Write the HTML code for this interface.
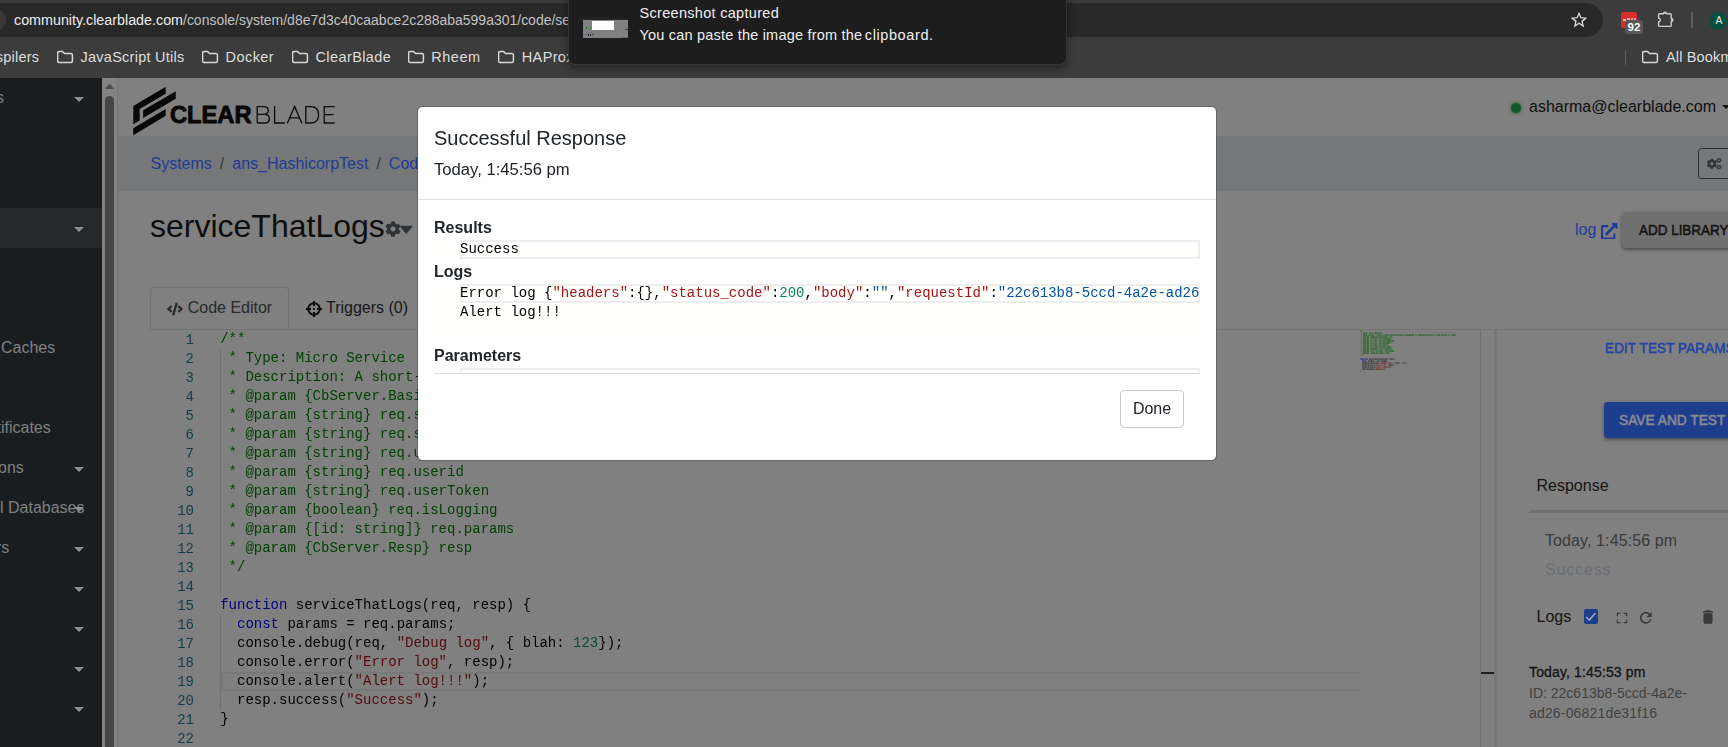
<!DOCTYPE html>
<html>
<head>
<meta charset="utf-8">
<title>ClearBlade</title>
<style>
*{box-sizing:border-box;margin:0;padding:0}
html,body{width:1728px;height:747px;overflow:hidden;background:#808080;font-family:"Liberation Sans",sans-serif;}
.abs{position:absolute;white-space:pre;}
#root{position:absolute;left:0;top:0;width:1728px;height:747px;overflow:hidden;background:#808080;}
/* ---------- browser chrome ---------- */
#chrome{position:absolute;left:0;top:0;width:1728px;height:78px;background:#3c3c3c;}
#urlbar{position:absolute;left:-30px;top:3px;width:1633px;height:34px;border-radius:17px;background:#282828;}
.ct{position:absolute;white-space:pre;font-size:14.5px;color:#dedede;line-height:20px;}
.bk{top:47px;letter-spacing:.15px}
.fold{position:absolute;top:50px;width:17px;height:14px;}
/* ---------- page ---------- */
#sidebar{position:absolute;left:0;top:78px;width:102px;height:669px;background:#1a1d20;}
.sbt{position:absolute;white-space:pre;font-size:16px;color:#808080;line-height:20px;}
.caret{position:absolute;width:0;height:0;border-left:5px solid transparent;border-right:5px solid transparent;border-top:5.5px solid #8e8e8e;}
#vscroll{position:absolute;left:102px;top:78px;width:15px;height:669px;background:#838383;}
#crumb{position:absolute;left:118px;top:136px;width:1610px;height:55px;background:#757779;}
.lnk{color:#1d3b96}
.code{position:absolute;left:0;white-space:pre;font-family:"Liberation Mono",monospace;font-size:14px;line-height:19px;height:19px;}
.ln{position:absolute;left:151px;margin-top:1px;width:43px;text-align:right;font-family:"Liberation Mono",monospace;font-size:14px;line-height:19px;color:#123c4a;}
.cm{color:#004000}.kw{color:#000080}.st{color:#520a0a}.nu{color:#054d37}.tx{color:#000}
.rm{transform-origin:0 50%;-webkit-text-stroke:.55px currentColor;}
/* ---------- modal ---------- */
#modal{position:absolute;left:417px;top:106px;width:800px;height:355px;background:#fff;background-clip:padding-box;border:1px solid rgba(0,0,0,.22);border-radius:5.500px;}
.mh{position:absolute;white-space:pre;color:#212529;}
.med{position:absolute;left:16px;width:766px;background:#fffffe;overflow:hidden;}
.mline{position:absolute;left:26px;width:740px;height:19px;border:2px solid #eeeeee;}
.mcode{position:absolute;left:26px;white-space:pre;font-family:"Liberation Mono",monospace;font-size:14px;line-height:19px;height:19px;color:#000;}
.js{color:#a31515}.jn{color:#098658}.jv{color:#0451a5}
</style>
</head>
<body>
<div id="root">

<!-- ======================= PAGE (dimmed) ======================= -->
<div id="sidebar">
  <div style="position:absolute;left:0;top:130px;width:102px;height:40px;background:#25282b"></div>
  <div class="sbt" style="left:-4px;top:10px">s</div>
  <div class="caret" style="left:74px;top:19px"></div>
  <div class="caret" style="left:74px;top:149px"></div>
  <div class="sbt" style="left:-3.5px;top:260px"> Caches</div>
  <div class="sbt" style="left:-3.500px;top:340px">tificates</div>
  <div class="sbt" style="left:-2px;top:380px">ons</div>
  <div class="caret" style="left:74px;top:389px"></div>
  <div class="sbt" style="left:0px;top:420px">l Databases</div>
  <div class="caret" style="left:74px;top:429px"></div>
  <div class="sbt" style="left:-4px;top:460px">rs</div>
  <div class="caret" style="left:74px;top:469px"></div>
  <div class="caret" style="left:74px;top:509px"></div>
  <div class="caret" style="left:74px;top:549px"></div>
  <div class="caret" style="left:74px;top:589px"></div>
  <div class="caret" style="left:74px;top:629px"></div>
</div>
<div id="vscroll">
  <div style="position:absolute;left:3px;top:18px;width:9px;height:700px;border-radius:4.5px;background:#464646"></div>
  <svg style="position:absolute;left:0;top:0" width="15" height="14" viewBox="102 78 15 14"><path d="M104.800,88.900 H114.200 L109.500,83.800 Z" fill="#4d4d4d"/></svg>
</div>
<div style="position:absolute;left:117px;top:78px;width:1px;height:669px;background:#767676"></div>
<div id="crumb"></div>

<!-- logo -->
<svg class="abs" style="left:130px;top:82px" width="212" height="56" viewBox="130 82 212 56">
  <polygon points="133.28,106.07 165.66,86.81 165.66,93.65 139.65,109.10 139.65,120.59 133.28,124.31" fill="#070707"/>
  <polygon points="143.14,110.34 175.75,91.16 175.75,98.69 143.14,118.10" fill="#070707"/>
  <polygon points="133.28,128.35 165.66,109.02 165.66,115.77 133.28,135.18" fill="#070707"/>
  <text x="170" y="123.1" font-family="Liberation Sans" font-weight="700" font-size="24.4" fill="#070707" textLength="81.5" lengthAdjust="spacingAndGlyphs" stroke="#070707" stroke-width=".9" stroke-linejoin="round">CLEAR</text>
  <g fill="none" stroke="#0c0c0c" stroke-width="1.3">
    <path d="M257.2,123 V106.6 H263.5 Q268.3,106.6 268.3,110.6 Q268.3,114.4 263.5,114.4 H257.2 M263.5,114.4 H264.3 Q269.4,114.4 269.4,118.7 Q269.4,123 264.3,123 H257.2"/>
    <path d="M274.6,106 V123 H285"/>
    <path d="M287.2,123.4 L294.6,106.4 L302,123.4 M289.7,117.8 H299.5"/>
    <path d="M305.8,123 V106.6 H311 Q318.6,106.6 318.6,114.8 Q318.6,123 311,123 Z"/>
    <path d="M334.6,106.6 H324.2 V123 H334.6 M324.2,114.6 H333.6"/>
  </g>
</svg>

<!-- user -->
<div class="abs" style="left:1511px;top:103px;width:10px;height:10px;border-radius:5px;background:#125826;box-shadow:0 0 3px 0.500px rgba(18,88,38,.75)"></div>
<div class="abs" style="left:1529px;top:97px;font-size:16px;line-height:20px;color:#0e0e0e">asharma@clearblade.com</div>
<div class="abs" style="left:1722px;top:105px;width:0;height:0;border-left:4px solid transparent;border-right:4px solid transparent;border-top:4px solid #111"></div>

<!-- breadcrumb -->
<div class="abs" style="left:150.500px;top:154px;font-size:16px;line-height:20px;color:#363a3e"><span class="lnk">Systems</span><span style="padding:0 8px">/</span><span class="lnk">ans_HashicorpTest</span><span style="padding:0 8px">/</span><span class="lnk">Code</span></div>
<div class="abs" style="left:1698px;top:148px;width:40px;height:31px;border:1px solid #2b2f33;border-radius:3.500px"></div>
<svg class="abs" style="left:1707px;top:157.700px" width="14.500" height="11.600" viewBox="0 0 640 512"><path fill="#303438" d="M512.1 191l-8.2 14.3c-3 5.3-9.400 7.500-15.100 5.400-11.800-4.400-22.600-10.700-32.100-18.600-4.600-3.800-5.800-10.500-2.800-15.700l8.200-14.300c-6.900-8-12.300-17.300-15.900-27.400h-16.500c-6 0-11.200-4.300-12.200-10.300-2-12-2.100-24.600 0-37.100 1-6 6.200-10.400 12.200-10.400h16.500c3.600-10.100 9-19.400 15.900-27.400l-8.200-14.300c-3-5.200-1.900-11.900 2.800-15.700 9.500-7.900 20.400-14.200 32.100-18.600 5.700-2.100 12.100.1 15.100 5.400l8.200 14.300c10.500-1.900 21.200-1.900 31.700 0L552 6.300c3-5.300 9.400-7.500 15.100-5.400 11.800 4.400 22.600 10.700 32.100 18.600 4.600 3.800 5.800 10.500 2.800 15.700l-8.200 14.300c6.900 8 12.300 17.300 15.900 27.400h16.500c6 0 11.200 4.300 12.200 10.300 2 12 2.100 24.600 0 37.100-1 6-6.200 10.400-12.200 10.400h-16.500c-3.600 10.100-9 19.400-15.900 27.400l8.200 14.300c3 5.200 1.900 11.900-2.800 15.700-9.500 7.900-20.400 14.200-32.100 18.600-5.700 2.100-12.100-.1-15.100-5.400l-8.200-14.300c-10.400 1.900-21.200 1.900-31.700 0zm-10.500-58.800c38.500 29.600 82.400-14.300 52.800-52.800-38.500-29.700-82.400 14.300-52.800 52.800zM386.300 286.100l33.700 16.800c10.100 5.800 14.500 18.100 10.500 29.100-8.900 24.200-26.400 46.400-42.600 65.800-7.400 8.900-20.200 11.100-30.300 5.300l-29.100-16.800c-16 13.700-34.600 24.600-54.900 31.700v33.600c0 11.600-8.300 21.600-19.700 23.600-24.600 4.200-50.400 4.400-75.900 0-11.500-2-20-11.900-20-23.600V418c-20.300-7.200-38.900-18-54.900-31.700L74 403c-10 5.800-22.900 3.600-30.300-5.300-16.200-19.400-33.300-41.600-42.200-65.700-4-10.900.4-23.200 10.500-29.100l33.300-16.800c-3.900-20.900-3.900-42.400 0-63.400L12 205.800c-10.100-5.800-14.600-18.100-10.500-29 8.900-24.200 26-46.400 42.200-65.800 7.400-8.900 20.200-11.100 30.300-5.300l29.100 16.800c16-13.700 34.600-24.600 54.900-31.700V57.100c0-11.500 8.200-21.500 19.600-23.500 24.600-4.200 50.500-4.400 76-.1 11.500 2 20 11.900 20 23.600v33.600c20.300 7.200 38.900 18 54.900 31.700l29.100-16.800c10-5.800 22.900-3.600 30.300 5.300 16.200 19.400 33.200 41.600 42.100 65.800 4 10.900.1 23.200-10 29.100l-33.700 16.800c3.900 21 3.900 42.500 0 63.500zm-117.600 21.100c59.200-77-28.700-164.900-105.700-105.700-59.200 77 28.700 164.900 105.700 105.700zm243.400 182.700l-8.200 14.300c-3 5.300-9.400 7.500-15.100 5.400-11.800-4.400-22.600-10.700-32.100-18.600-4.600-3.800-5.800-10.500-2.800-15.700l8.200-14.300c-6.900-8-12.300-17.300-15.900-27.400h-16.500c-6 0-11.200-4.300-12.200-10.300-2-12-2.100-24.600 0-37.100 1-6 6.200-10.400 12.200-10.400h16.500c3.600-10.100 9-19.400 15.900-27.400l-8.200-14.300c-3-5.200-1.900-11.900 2.800-15.700 9.500-7.900 20.400-14.200 32.100-18.600 5.700-2.100 12.100.1 15.100 5.400l8.200 14.300c10.500-1.900 21.200-1.900 31.700 0l8.200-14.300c3-5.300 9.400-7.500 15.100-5.400 11.800 4.400 22.600 10.700 32.100 18.600 4.600 3.800 5.800 10.500 2.800 15.700l-8.200 14.300c6.900 8 12.300 17.300 15.900 27.400h16.500c6 0 11.200 4.300 12.200 10.300 2 12 2.100 24.600 0 37.100-1 6-6.200 10.400-12.200 10.400h-16.500c-3.600 10.100-9 19.400-15.900 27.400l8.200 14.300c3 5.200 1.900 11.900-2.800 15.700-9.500 7.900-20.400 14.200-32.100 18.600-5.700 2.100-12.100-.1-15.100-5.400l-8.200-14.300c-10.400 1.900-21.200 1.900-31.700 0zM501.600 431c38.500 29.600 82.400-14.300 52.800-52.800-38.500-29.600-82.400 14.300-52.800 52.800z"/></svg>

<!-- title -->
<div class="abs" style="left:150px;top:207px;font-size:32px;line-height:38px;color:#0e0e0e">serviceThatLogs</div>
<svg class="abs" style="left:385px;top:221px" width="16" height="16" viewBox="0 0 512 512"><path fill="#303336" d="M487.4 315.700l-42.600-24.600c4.300-23.200 4.300-47 0-70.200l42.600-24.600c4.900-2.800 7.100-8.600 5.500-14-11.100-35.600-30-67.800-54.700-94.600-3.800-4.100-10-5.100-14.800-2.300L380.800 110c-17.900-15.400-38.500-27.300-60.800-35.100V25.800c0-5.600-3.900-10.500-9.400-11.700-36.700-8.200-74.300-7.800-109.200 0-5.500 1.200-9.400 6.100-9.400 11.700V75c-22.200 7.900-42.800 19.800-60.800 35.100L88.700 85.500c-4.900-2.800-11-1.900-14.800 2.300-24.700 26.700-43.600 58.900-54.700 94.600-1.700 5.400.6 11.200 5.500 14L67.300 221c-4.300 23.200-4.300 47 0 70.200l-42.600 24.600c-4.900 2.800-7.100 8.600-5.500 14 11.100 35.600 30 67.800 54.700 94.600 3.800 4.100 10 5.100 14.800 2.300l42.600-24.600c17.900 15.400 38.500 27.300 60.800 35.100v49.200c0 5.600 3.900 10.500 9.400 11.700 36.700 8.200 74.300 7.800 109.200 0 5.500-1.200 9.400-6.100 9.400-11.700v-49.200c22.200-7.900 42.800-19.800 60.800-35.100l42.600 24.600c4.900 2.800 11 1.900 14.800-2.300 24.700-26.700 43.600-58.900 54.700-94.600 1.500-5.500-.7-11.300-5.600-14.100zM256 336c-44.100 0-80-35.900-80-80s35.900-80 80-80 80 35.900 80 80-35.900 80-80 80z"/></svg>
<svg class="abs" style="left:399px;top:225px" width="16" height="10" viewBox="0 0 16 10"><path d="M0.300,0.800 H14.100 L7.200,8.900 Z" fill="#303336"/></svg>

<!-- log link + add library -->
<div class="abs lnk" style="left:1575px;top:219.5px;font-size:16px;line-height:20px">log</div>
<svg class="abs" style="left:1601px;top:222.5px" width="16.500" height="16.500" viewBox="0 0 512 512"><path fill="#1d3b96" d="M432 320H400a16 16 0 0 0-16 16V448H64V128H208a16 16 0 0 0 16-16V80a16 16 0 0 0-16-16H48A48 48 0 0 0 0 112V464a48 48 0 0 0 48 48H400a48 48 0 0 0 48-48V336A16 16 0 0 0 432 320ZM488 0h-128c-21.400 0-32 25.900-17 41l35.700 35.700L135 320.400a24 24 0 0 0 0 34L157.700 377a24 24 0 0 0 34 0L435.300 133.300 471 169c15 15 41 4.500 41-17V24A24 24 0 0 0 488 0Z"/></svg>
<div class="abs" style="left:1622px;top:212px;width:130px;height:36px;border-radius:4px;background:#707070;box-shadow:0 2px 3px rgba(0,0,0,.28),0 1px 5px rgba(0,0,0,.18)"></div>
<div class="abs rm" style="left:1638.500px;top:220px;font-size:14.500px;line-height:20px;color:#141414;transform:scaleX(.928)">ADD LIBRARY</div>

<!-- tabs -->
<div class="abs" style="left:150px;top:329px;width:1578px;height:1px;background:#727476"></div>
<div class="abs" style="left:150px;top:287px;width:139px;height:43px;border:1px solid #727476;border-radius:4px 4px 0 0"></div>
<svg class="abs" style="left:166.800px;top:301.500px" width="16" height="14" viewBox="0 0 640 512"><path fill="#26292c" d="M278.9 511.5l-61-17.700c-6.400-1.800-10-8.500-8.200-14.900L346.200 8.700c1.800-6.400 8.500-10 14.900-8.200l61 17.700c6.400 1.800 10 8.500 8.200 14.900L293.800 503.300c-1.900 6.400-8.500 10.100-14.900 8.200zm-114-112.200l43.500-46.400c4.600-4.900 4.300-12.700-.8-17.200L117 256l90.600-79.700c5.100-4.500 5.500-12.300.8-17.200l-43.500-46.400c-4.500-4.800-12.100-5.100-17-.5L3.800 247.200c-5.100 4.700-5.100 12.800 0 17.500l144.100 135.100c4.900 4.600 12.500 4.400 17-.5zm327.200.6l144.100-135.100c5.100-4.700 5.100-12.800 0-17.500L492.100 112.100c-4.800-4.500-12.400-4.300-17 .5L431.600 159c-4.600 4.900-4.300 12.700.8 17.200L523 256l-90.600 79.700c-5.100 4.500-5.500 12.300-.8 17.200l43.500 46.400c4.500 4.900 12.100 5.100 17 .6z"/></svg>
<div class="abs" style="left:187.700px;top:297.700px;font-size:16px;line-height:20px;color:#26292c">Code Editor</div>
<svg class="abs" style="left:306px;top:301px" width="16" height="16" viewBox="0 0 512 512"><path fill="#0c0c0c" d="M500 224h-30.364C455.724 130.325 381.675 56.276 288 42.364V12c0-6.627-5.373-12-12-12h-40c-6.627 0-12 5.373-12 12v30.364C130.325 56.276 56.276 130.325 42.364 224H12c-6.627 0-12 5.373-12 12v40c0 6.627 5.373 12 12 12h30.364C56.276 381.675 130.325 455.724 224 469.636V500c0 6.627 5.373 12 12 12h40c6.627 0 12-5.373 12-12v-30.364C381.675 455.724 455.724 381.675 469.636 288H500c6.627 0 12-5.373 12-12v-40c0-6.627-5.373-12-12-12zM288 404.634V364c0-6.627-5.373-12-12-12h-40c-6.627 0-12 5.373-12 12v40.634C165.826 392.232 119.783 346.243 107.366 288H148c6.627 0 12-5.373 12-12v-40c0-6.627-5.373-12-12-12h-40.634C119.768 165.826 165.757 119.783 224 107.366V148c0 6.627 5.373 12 12 12h40c6.627 0 12-5.373 12-12v-40.634C346.174 119.768 392.217 165.757 404.634 224H364c-6.627 0-12 5.373-12 12v40c0 6.627 5.373 12 12 12h40.634C392.232 346.174 346.243 392.217 288 404.634zM288 256c0 17.673-14.327 32-32 32s-32-14.327-32-32c0-17.673 14.327-32 32-32s32 14.327 32 32z"/></svg>
<div class="abs" style="left:326px;top:297.700px;font-size:16px;line-height:20px;color:#14171a">Triggers (0)</div>

<!-- code editor -->
<div class="abs" style="left:220px;top:349px;width:1px;height:247px;background:#727272"></div>
<div class="abs" style="left:220px;top:615px;width:1px;height:95px;background:#727272"></div>
<div class="abs" style="left:221px;top:672px;width:1139px;height:19px;border:2px solid #787878;border-right:0"></div>
<div id="codelayer" style="position:absolute;left:0;top:0;width:1480px;height:747px;will-change:transform">
<div class="ln" style="top:330px">1</div>
<div class="code" style="left:220.200px;top:330px"><span class="cm">/**</span></div>
<div class="ln" style="top:349px">2</div>
<div class="code" style="left:220.200px;top:349px"><span class="cm"> * Type: Micro Service</span></div>
<div class="ln" style="top:368px">3</div>
<div class="code" style="left:220.200px;top:368px"><span class="cm"> * Description: A short-lived service which is expected to complete within a fixed period of time.</span></div>
<div class="ln" style="top:387px">4</div>
<div class="code" style="left:220.200px;top:387px"><span class="cm"> * @param {CbServer.BasicReq} req</span></div>
<div class="ln" style="top:406px">5</div>
<div class="code" style="left:220.200px;top:406px"><span class="cm"> * @param {string} req.systemKey</span></div>
<div class="ln" style="top:425px">6</div>
<div class="code" style="left:220.200px;top:425px"><span class="cm"> * @param {string} req.systemSecret</span></div>
<div class="ln" style="top:444px">7</div>
<div class="code" style="left:220.200px;top:444px"><span class="cm"> * @param {string} req.userEmail</span></div>
<div class="ln" style="top:463px">8</div>
<div class="code" style="left:220.200px;top:463px"><span class="cm"> * @param {string} req.userid</span></div>
<div class="ln" style="top:482px">9</div>
<div class="code" style="left:220.200px;top:482px"><span class="cm"> * @param {string} req.userToken</span></div>
<div class="ln" style="top:501px">10</div>
<div class="code" style="left:220.200px;top:501px"><span class="cm"> * @param {boolean} req.isLogging</span></div>
<div class="ln" style="top:520px">11</div>
<div class="code" style="left:220.200px;top:520px"><span class="cm"> * @param {[id: string]} req.params</span></div>
<div class="ln" style="top:539px">12</div>
<div class="code" style="left:220.200px;top:539px"><span class="cm"> * @param {CbServer.Resp} resp</span></div>
<div class="ln" style="top:558px">13</div>
<div class="code" style="left:220.200px;top:558px"><span class="cm"> */</span></div>
<div class="ln" style="top:577px">14</div>
<div class="ln" style="top:596px">15</div>
<div class="code" style="left:220.200px;top:596px"><span class="kw">function</span><span class="tx"> serviceThatLogs(req, resp) {</span></div>
<div class="ln" style="top:615px">16</div>
<div class="code" style="left:220.200px;top:615px"><span class="tx">  </span><span class="kw">const</span><span class="tx"> params = req.params;</span></div>
<div class="ln" style="top:634px">17</div>
<div class="code" style="left:220.200px;top:634px"><span class="tx">  console.debug(req, </span><span class="st">"Debug log"</span><span class="tx">, { blah: </span><span class="nu">123</span><span class="tx">});</span></div>
<div class="ln" style="top:653px">18</div>
<div class="code" style="left:220.200px;top:653px"><span class="tx">  console.error(</span><span class="st">"Error log"</span><span class="tx">, resp);</span></div>
<div class="ln" style="top:672px">19</div>
<div class="code" style="left:220.200px;top:672px"><span class="tx">  console.alert(</span><span class="st">"Alert log!!!"</span><span class="tx">);</span></div>
<div class="ln" style="top:691px">20</div>
<div class="code" style="left:220.200px;top:691px"><span class="tx">  resp.success(</span><span class="st">"Success"</span><span class="tx">);</span></div>
<div class="ln" style="top:710px">21</div>
<div class="code" style="left:220.200px;top:710px"><span class="tx">}</span></div>
<div class="ln" style="top:729px">22</div>
</div>
<!-- minimap placeholder -->
<svg class="abs" style="left:1360px;top:330px" width="100" height="44" viewBox="0 0 100 44" id="minimap"><path d="M0.00 1.05h0.98M0.98 1.05h0.98M1.96 1.05h0.98M0.98 3.05h0.98M9.80 3.05h0.98M11.76 3.05h0.98M16.66 3.05h0.98M18.62 3.05h0.98M0.98 5.05h0.98M6.86 5.05h0.98M7.84 5.05h0.98M9.80 5.05h0.98M10.78 5.05h0.98M20.58 5.05h0.98M21.56 5.05h0.98M23.52 5.05h0.98M24.50 5.05h0.98M31.36 5.05h0.98M33.32 5.05h0.98M39.20 5.05h0.98M43.12 5.05h0.98M50.96 5.05h0.98M54.88 5.05h0.98M61.74 5.05h0.98M63.70 5.05h0.98M67.62 5.05h0.98M68.60 5.05h0.98M70.56 5.05h0.98M75.46 5.05h0.98M76.44 5.05h0.98M83.30 5.05h0.98M84.28 5.05h0.98M89.18 5.05h0.98M91.14 5.05h0.98M92.12 5.05h0.98M0.98 7.05h0.98M5.88 7.05h0.98M9.80 7.05h0.98M14.70 7.05h0.98M17.64 7.05h0.98M22.54 7.05h0.98M27.44 7.05h0.98M29.40 7.05h0.98M0.98 9.05h0.98M5.88 9.05h0.98M9.80 9.05h0.98M11.76 9.05h0.98M12.74 9.05h0.98M13.72 9.05h0.98M16.66 9.05h0.98M18.62 9.05h0.98M25.48 9.05h0.98M0.98 11.05h0.98M5.88 11.05h0.98M9.80 11.05h0.98M11.76 11.05h0.98M12.74 11.05h0.98M13.72 11.05h0.98M16.66 11.05h0.98M18.62 11.05h0.98M25.48 11.05h0.98M31.36 11.05h0.98M33.32 11.05h0.98M0.98 13.05h0.98M5.88 13.05h0.98M9.80 13.05h0.98M11.76 13.05h0.98M12.74 13.05h0.98M13.72 13.05h0.98M16.66 13.05h0.98M18.62 13.05h0.98M25.48 13.05h0.98M29.40 13.05h0.98M30.38 13.05h0.98M0.98 15.05h0.98M5.88 15.05h0.98M9.80 15.05h0.98M11.76 15.05h0.98M12.74 15.05h0.98M13.72 15.05h0.98M16.66 15.05h0.98M18.62 15.05h0.98M25.48 15.05h0.98M26.46 15.05h0.98M0.98 17.05h0.98M5.88 17.05h0.98M9.80 17.05h0.98M11.76 17.05h0.98M12.74 17.05h0.98M13.72 17.05h0.98M16.66 17.05h0.98M18.62 17.05h0.98M25.48 17.05h0.98M0.98 19.05h0.98M5.88 19.05h0.98M9.80 19.05h0.98M13.72 19.05h0.98M17.64 19.05h0.98M19.60 19.05h0.98M23.52 19.05h0.98M29.40 19.05h0.98M0.98 21.05h0.98M5.88 21.05h0.98M9.80 21.05h0.98M10.78 21.05h0.98M11.76 21.05h0.98M16.66 21.05h0.98M17.64 21.05h0.98M18.62 21.05h0.98M21.56 21.05h0.98M22.54 21.05h0.98M24.50 21.05h0.98M30.38 21.05h0.98M0.98 23.05h0.98M5.88 23.05h0.98M9.80 23.05h0.98M14.70 23.05h0.98M17.64 23.05h0.98M23.52 23.05h0.98M25.48 23.05h0.98M0.98 25.05h0.98M1.96 25.05h0.98" stroke="#086008" stroke-opacity="0.33" stroke-width="1.7" fill="none"/><path d="M2.94 3.05h0.98M3.92 3.05h0.98M4.90 3.05h0.98M10.78 3.05h0.98M12.74 3.05h0.98M17.64 3.05h0.98M19.60 3.05h0.98M4.90 5.05h0.98M5.88 5.05h0.98M8.82 5.05h0.98M11.76 5.05h0.98M12.74 5.05h0.98M15.68 5.05h0.98M17.64 5.05h0.98M18.62 5.05h0.98M19.60 5.05h0.98M25.48 5.05h0.98M27.44 5.05h0.98M29.40 5.05h0.98M32.34 5.05h0.98M34.30 5.05h0.98M38.22 5.05h0.98M40.18 5.05h0.98M41.16 5.05h0.98M44.10 5.05h0.98M47.04 5.05h0.98M48.02 5.05h0.98M49.98 5.05h0.98M52.92 5.05h0.98M55.86 5.05h0.98M57.82 5.05h0.98M58.80 5.05h0.98M60.76 5.05h0.98M69.58 5.05h0.98M71.54 5.05h0.98M77.42 5.05h0.98M79.38 5.05h0.98M81.34 5.05h0.98M85.26 5.05h0.98M86.24 5.05h0.98M88.20 5.05h0.98M3.92 7.05h0.98M10.78 7.05h0.98M11.76 7.05h0.98M15.68 7.05h0.98M21.56 7.05h0.98M23.52 7.05h0.98M26.46 7.05h0.98M31.36 7.05h0.98M3.92 9.05h0.98M10.78 9.05h0.98M14.70 9.05h0.98M20.58 9.05h0.98M22.54 9.05h0.98M23.52 9.05h0.98M24.50 9.05h0.98M30.38 9.05h0.98M3.92 11.05h0.98M10.78 11.05h0.98M14.70 11.05h0.98M20.58 11.05h0.98M22.54 11.05h0.98M23.52 11.05h0.98M24.50 11.05h0.98M30.38 11.05h0.98M3.92 13.05h0.98M10.78 13.05h0.98M14.70 13.05h0.98M20.58 13.05h0.98M22.54 13.05h0.98M23.52 13.05h0.98M3.92 15.05h0.98M10.78 15.05h0.98M14.70 15.05h0.98M20.58 15.05h0.98M22.54 15.05h0.98M23.52 15.05h0.98M27.44 15.05h0.98M3.92 17.05h0.98M10.78 17.05h0.98M14.70 17.05h0.98M20.58 17.05h0.98M22.54 17.05h0.98M23.52 17.05h0.98M26.46 17.05h0.98M27.44 17.05h0.98M28.42 17.05h0.98M30.38 17.05h0.98M3.92 19.05h0.98M10.78 19.05h0.98M11.76 19.05h0.98M12.74 19.05h0.98M16.66 19.05h0.98M21.56 19.05h0.98M24.50 19.05h0.98M25.48 19.05h0.98M26.46 19.05h0.98M30.38 19.05h0.98M3.92 21.05h0.98M12.74 21.05h0.98M15.68 21.05h0.98M19.60 21.05h0.98M26.46 21.05h0.98M28.42 21.05h0.98M33.32 21.05h0.98M3.92 23.05h0.98M10.78 23.05h0.98M11.76 23.05h0.98M15.68 23.05h0.98M21.56 23.05h0.98M22.54 23.05h0.98M27.44 23.05h0.98M28.42 23.05h0.98" stroke="#086008" stroke-opacity="0.50" stroke-width="1.7" fill="none"/><path d="M5.88 3.05h0.98M8.82 3.05h0.98M14.70 3.05h0.98M15.68 3.05h0.98M20.58 3.05h0.98M2.94 5.05h0.98M3.92 5.05h0.98M26.46 5.05h0.98M30.38 5.05h0.98M35.28 5.05h0.98M37.24 5.05h0.98M46.06 5.05h0.98M49.00 5.05h0.98M51.94 5.05h0.98M59.78 5.05h0.98M62.72 5.05h0.98M64.68 5.05h0.98M66.64 5.05h0.98M73.50 5.05h0.98M78.40 5.05h0.98M82.32 5.05h0.98M93.10 5.05h0.98M94.08 5.05h0.98M2.94 7.05h0.98M4.90 7.05h0.98M6.86 7.05h0.98M7.84 7.05h0.98M12.74 7.05h0.98M13.72 7.05h0.98M16.66 7.05h0.98M19.60 7.05h0.98M20.58 7.05h0.98M24.50 7.05h0.98M25.48 7.05h0.98M30.38 7.05h0.98M2.94 9.05h0.98M4.90 9.05h0.98M6.86 9.05h0.98M7.84 9.05h0.98M15.68 9.05h0.98M19.60 9.05h0.98M26.46 9.05h0.98M27.44 9.05h0.98M28.42 9.05h0.98M29.40 9.05h0.98M2.94 11.05h0.98M4.90 11.05h0.98M6.86 11.05h0.98M7.84 11.05h0.98M15.68 11.05h0.98M19.60 11.05h0.98M26.46 11.05h0.98M27.44 11.05h0.98M28.42 11.05h0.98M29.40 11.05h0.98M32.34 11.05h0.98M2.94 13.05h0.98M4.90 13.05h0.98M6.86 13.05h0.98M7.84 13.05h0.98M15.68 13.05h0.98M19.60 13.05h0.98M24.50 13.05h0.98M26.46 13.05h0.98M27.44 13.05h0.98M28.42 13.05h0.98M2.94 15.05h0.98M4.90 15.05h0.98M6.86 15.05h0.98M7.84 15.05h0.98M15.68 15.05h0.98M19.60 15.05h0.98M24.50 15.05h0.98M2.94 17.05h0.98M4.90 17.05h0.98M6.86 17.05h0.98M7.84 17.05h0.98M15.68 17.05h0.98M19.60 17.05h0.98M24.50 17.05h0.98M29.40 17.05h0.98M2.94 19.05h0.98M4.90 19.05h0.98M6.86 19.05h0.98M7.84 19.05h0.98M14.70 19.05h0.98M15.68 19.05h0.98M20.58 19.05h0.98M27.44 19.05h0.98M28.42 19.05h0.98M31.36 19.05h0.98M2.94 21.05h0.98M4.90 21.05h0.98M6.86 21.05h0.98M7.84 21.05h0.98M20.58 21.05h0.98M25.48 21.05h0.98M29.40 21.05h0.98M31.36 21.05h0.98M32.34 21.05h0.98M2.94 23.05h0.98M4.90 23.05h0.98M6.86 23.05h0.98M7.84 23.05h0.98M12.74 23.05h0.98M13.72 23.05h0.98M16.66 23.05h0.98M19.60 23.05h0.98M20.58 23.05h0.98M26.46 23.05h0.98" stroke="#086008" stroke-opacity="0.66" stroke-width="1.7" fill="none"/><path d="M6.86 3.05h0.98M13.72 5.05h0.98M22.54 5.05h0.98M95.06 5.05h0.98M18.62 7.05h0.98M21.56 9.05h0.98M21.56 11.05h0.98M21.56 13.05h0.98M21.56 15.05h0.98M21.56 17.05h0.98M22.54 19.05h0.98M13.72 21.05h0.98M27.44 21.05h0.98M18.62 23.05h0.98" stroke="#086008" stroke-opacity="0.17" stroke-width="1.7" fill="none"/><path d="M0.00 29.05h0.98M3.92 29.05h0.98M4.90 29.05h0.98M5.88 31.05h0.98" stroke="#101098" stroke-opacity="0.33" stroke-width="1.7" fill="none"/><path d="M0.98 29.05h0.98M1.96 29.05h0.98M2.94 29.05h0.98M5.88 29.05h0.98M6.86 29.05h0.98M1.96 31.05h0.98M2.94 31.05h0.98M3.92 31.05h0.98M4.90 31.05h0.98" stroke="#101098" stroke-opacity="0.50" stroke-width="1.7" fill="none"/><path d="M8.82 29.05h0.98M11.76 29.05h0.98M13.72 29.05h0.98M15.68 29.05h0.98M16.66 29.05h0.98M19.60 29.05h0.98M20.58 29.05h0.98M22.54 29.05h0.98M26.46 29.05h0.98M31.36 29.05h0.98M32.34 29.05h0.98M7.84 31.05h0.98M12.74 31.05h0.98M18.62 31.05h0.98M20.58 31.05h0.98M25.48 31.05h0.98M1.96 33.05h0.98M2.94 33.05h0.98M3.92 33.05h0.98M4.90 33.05h0.98M5.88 33.05h0.98M9.80 33.05h0.98M11.76 33.05h0.98M12.74 33.05h0.98M17.64 33.05h0.98M35.28 33.05h0.98M38.22 33.05h0.98M1.96 35.05h0.98M2.94 35.05h0.98M3.92 35.05h0.98M4.90 35.05h0.98M5.88 35.05h0.98M12.74 35.05h0.98M30.38 35.05h0.98M31.36 35.05h0.98M1.96 37.05h0.98M2.94 37.05h0.98M3.92 37.05h0.98M4.90 37.05h0.98M5.88 37.05h0.98M3.92 39.05h0.98M4.90 39.05h0.98M6.86 39.05h0.98M7.84 39.05h0.98M8.82 39.05h0.98M9.80 39.05h0.98M11.76 39.05h0.98M12.74 39.05h0.98" stroke="#101010" stroke-opacity="0.40" stroke-width="1.7" fill="none"/><path d="M9.80 29.05h0.98M14.70 29.05h0.98M17.64 29.05h0.98M21.56 29.05h0.98M25.48 29.05h0.98M30.38 29.05h0.98M8.82 31.05h0.98M10.78 31.05h0.98M11.76 31.05h0.98M17.64 31.05h0.98M21.56 31.05h0.98M23.52 31.05h0.98M24.50 31.05h0.98M7.84 33.05h0.98M10.78 33.05h0.98M13.72 33.05h0.98M16.66 33.05h0.98M37.24 33.05h0.98M7.84 35.05h0.98M9.80 35.05h0.98M29.40 35.05h0.98M7.84 37.05h0.98M9.80 37.05h0.98M11.76 37.05h0.98M2.94 39.05h0.98M10.78 39.05h0.98" stroke="#101010" stroke-opacity="0.53" stroke-width="1.7" fill="none"/><path d="M10.78 29.05h0.98M12.74 29.05h0.98M18.62 29.05h0.98M23.52 29.05h0.98M24.50 29.05h0.98M29.40 29.05h0.98M33.32 29.05h0.98M35.28 29.05h0.98M9.80 31.05h0.98M14.70 31.05h0.98M16.66 31.05h0.98M22.54 31.05h0.98M26.46 31.05h0.98M6.86 33.05h0.98M14.70 33.05h0.98M15.68 33.05h0.98M33.32 33.05h0.98M36.26 33.05h0.98M44.10 33.05h0.98M45.08 33.05h0.98M46.06 33.05h0.98M6.86 35.05h0.98M10.78 35.05h0.98M11.76 35.05h0.98M13.72 35.05h0.98M14.70 35.05h0.98M28.42 35.05h0.98M32.34 35.05h0.98M33.32 35.05h0.98M6.86 37.05h0.98M10.78 37.05h0.98M12.74 37.05h0.98M13.72 37.05h0.98M14.70 37.05h0.98M29.40 37.05h0.98M30.38 37.05h0.98M1.96 39.05h0.98M13.72 39.05h0.98M23.52 39.05h0.98M24.50 39.05h0.98M0.00 41.05h0.98" stroke="#101010" stroke-opacity="0.27" stroke-width="1.7" fill="none"/><path d="M27.44 29.05h0.98M19.60 31.05h0.98M8.82 33.05h0.98M18.62 33.05h0.98M31.36 33.05h0.98M39.20 33.05h0.98M8.82 35.05h0.98M26.46 35.05h0.98M8.82 37.05h0.98M5.88 39.05h0.98" stroke="#101010" stroke-opacity="0.14" stroke-width="1.7" fill="none"/><path d="M20.58 33.05h0.98M27.44 33.05h0.98M30.38 33.05h0.98M15.68 35.05h0.98M17.64 35.05h0.98M18.62 35.05h0.98M20.58 35.05h0.98M22.54 35.05h0.98M25.48 35.05h0.98M15.68 37.05h0.98M17.64 37.05h0.98M19.60 37.05h0.98M20.58 37.05h0.98M22.54 37.05h0.98M25.48 37.05h0.98M26.46 37.05h0.98M27.44 37.05h0.98M28.42 37.05h0.98M14.70 39.05h0.98M22.54 39.05h0.98" stroke="#7a0e0e" stroke-opacity="0.33" stroke-width="1.7" fill="none"/><path d="M21.56 33.05h0.98M22.54 33.05h0.98M25.48 33.05h0.98M29.40 33.05h0.98M16.66 35.05h0.98M24.50 35.05h0.98M18.62 37.05h0.98M24.50 37.05h0.98M15.68 39.05h0.98M19.60 39.05h0.98" stroke="#7a0e0e" stroke-opacity="0.66" stroke-width="1.7" fill="none"/><path d="M23.52 33.05h0.98M24.50 33.05h0.98M28.42 33.05h0.98M19.60 35.05h0.98M23.52 35.05h0.98M16.66 37.05h0.98M23.52 37.05h0.98M16.66 39.05h0.98M17.64 39.05h0.98M18.62 39.05h0.98M20.58 39.05h0.98M21.56 39.05h0.98" stroke="#7a0e0e" stroke-opacity="0.50" stroke-width="1.7" fill="none"/><path d="M41.16 33.05h0.98" stroke="#176a50" stroke-opacity="0.33" stroke-width="1.7" fill="none"/><path d="M42.14 33.05h0.98" stroke="#176a50" stroke-opacity="0.50" stroke-width="1.7" fill="none"/><path d="M43.12 33.05h0.98" stroke="#176a50" stroke-opacity="0.66" stroke-width="1.7" fill="none"/></svg>
<!-- editor scroll + splitter -->
<div class="abs" style="left:1480px;top:330px;width:1px;height:417px;background:#727272"></div>
<div class="abs" style="left:1494px;top:330px;width:3px;height:417px;background:#777777"></div>
<div class="abs" style="left:1481px;top:672px;width:13px;height:2px;background:#1e1e1e"></div>

<!-- right panel -->
<div class="abs rm" style="left:1604.500px;top:338px;font-size:14.500px;line-height:20px;color:#2444a6;transform:scaleX(.945)">EDIT TEST PARAMS</div>
<div class="abs" style="left:1604px;top:402px;width:140px;height:36px;border-radius:4px;background:#1d3d8d;box-shadow:0 2px 3px rgba(0,0,0,.28),0 1px 5px rgba(0,0,0,.18)"></div>
<div class="abs rm" style="left:1619px;top:410px;font-size:14.500px;line-height:20px;color:#8b8b93;transform:scaleX(.948)">SAVE AND TEST</div>
<div class="abs" style="left:1536.500px;top:475.500px;font-size:16px;line-height:20px;color:#141414">Response</div>
<div class="abs" style="left:1529px;top:510px;width:200px;height:3px;background:#707070"></div>
<div class="abs" style="left:1545px;top:531px;font-size:16px;line-height:20px;color:#3a3a3a;letter-spacing:.1px">Today, 1:45:56 pm</div>
<div class="abs" style="left:1545px;top:559.500px;font-size:16px;line-height:20px;color:#6b6f76;letter-spacing:.85px">Success</div>
<div class="abs" style="left:1536.500px;top:607px;font-size:16px;line-height:20px;color:#141414">Logs</div>
<div class="abs" style="left:1583.600px;top:609.400px;width:14.800px;height:15px;border-radius:2px;background:#1d3d8d"></div>
<svg class="abs" style="left:1583.200px;top:609.200px" width="15" height="15" viewBox="0 0 15 15"><path d="M3.200,8 L6.200,10.900 L12.400,4.300" fill="none" stroke="#b0b0b6" stroke-width="1.400"/></svg>
<svg class="abs" style="left:1615px;top:611px" width="14" height="14" viewBox="0 0 24 24"><path fill="#383838" d="M3 5v4h2V5h4V3H5c-1.100 0-2 .9-2 2zm2 10H3v4c0 1.100.9 2 2 2h4v-2H5v-4zm14 4h-4v2h4c1.100 0 2-.9 2-2v-4h-2v4zm0-16h-4v2h4v4h2V5c0-1.100-.9-2-2-2z"/></svg>
<svg class="abs" style="left:1637px;top:609.300px" width="17.600" height="17.600" viewBox="0 0 24 24"><path fill="#383838" d="M17.650 6.350C16.200 4.900 14.210 4 12 4c-4.420 0-7.990 3.580-7.990 8s3.570 8 7.990 8c3.730 0 6.840-2.550 7.730-6h-2.080c-.82 2.330-3.040 4-5.650 4-3.310 0-6-2.690-6-6s2.690-6 6-6c1.660 0 3.140.69 4.220 1.780L13 11h7V4l-2.350 2.350z"/></svg>
<svg class="abs" style="left:1699px;top:608px" width="18" height="18" viewBox="0 0 24 24"><path fill="#383838" d="M6 19c0 1.100.9 2 2 2h8c1.100 0 2-.9 2-2V7H6v12zM19 4h-3.500l-1-1h-5l-1 1H5v2h14V4z"/></svg>
<div class="abs rm" style="left:1529px;top:661.500px;font-size:14px;line-height:20px;color:#141414;-webkit-text-stroke-width:.3px;letter-spacing:.14px">Today, 1:45:53 pm</div>
<div class="abs" style="left:1529px;top:683px;font-size:14px;line-height:20px;color:#414141">ID: 22c613b8-5ccd-4a2e-</div>
<div class="abs" style="left:1529px;top:703px;font-size:14px;line-height:20px;color:#414141;letter-spacing:.17px">ad26-06821de31f16</div>

<!-- MODAL -->
<div id="modal"></div>

<div id="mlayer" style="position:absolute;left:0;top:0;width:1728px;height:747px;will-change:transform">
<div class="mh" style="left:434px;top:123px;font-size:20px;line-height:30px">Successful Response</div>
<div class="mh" style="left:434px;top:158px;font-size:16.650px;line-height:24px">Today, 1:45:56 pm</div>
<div class="abs" style="left:418px;top:199px;width:798px;height:1px;background:#dee2e6"></div>
<div class="mh" style="left:434px;top:215.500px;font-size:16px;line-height:24px;font-weight:700">Results</div>
<div class="med" style="top:240px;height:19px;left:434px"><div class="mline" style="top:0"></div><div class="mcode" style="top:0;left:26px">Success</div></div>
<div class="mh" style="left:434px;top:259.500px;font-size:16px;line-height:24px;font-weight:700">Logs</div>
<div class="med" style="top:284px;height:57px;left:434px"><div class="mline" style="top:0"></div><div class="mcode" style="top:0;left:26px">Error log {<span class="js">"headers"</span>:{},<span class="js">"status_code"</span>:<span class="jn">200</span>,<span class="js">"body"</span>:<span class="jv">""</span>,<span class="js">"requestId"</span>:<span class="jv">"22c613b8-5ccd-4a2e-ad26-06821de31f16"</span>}</div><div class="mcode" style="top:19px;left:26px">Alert log!!!</div></div>
<div class="mh" style="left:434px;top:343.500px;font-size:16px;line-height:24px;font-weight:700">Parameters</div>
<div class="med" style="top:368px;height:5px;left:434px"><div class="mline" style="top:0"></div></div>
<div class="abs" style="left:434px;top:373px;width:766px;height:1px;background:#dee2e6"></div>
<div class="abs" style="left:1120px;top:390px;width:64px;height:38px;border:1px solid #c4c9ce;border-radius:4px;background:#fff;font-size:16px;line-height:36px;text-align:center;color:#212529">Done</div>

</div>

<!-- ======================= BROWSER CHROME ======================= -->
<div id="chrome">
  <div id="urlbar"></div>
  <div class="abs" style="left:-16px;top:9px;width:22px;height:22px;border-radius:11px;background:#393939"></div>
  <div class="abs" style="left:0;top:3px;width:568px;height:34px;overflow:hidden"><div class="ct" style="left:14px;top:7.200px;font-size:15.500px;color:#ececec;transform-origin:0 50%;transform:scaleX(.9225)">community.clearblade.com</div><div class="ct" style="left:183.200px;top:7.200px;font-size:15.500px;color:#c2c2c2;transform-origin:0 50%;transform:scaleX(.902)">/console/system/d8e7d3c40caabce2c288aba599a301/code/service/serviceThatLogs</div></div>
  <div class="ct bk" style="left:-34.600px;letter-spacing:.25px">Transpilers</div>
  <svg class="fold" style="left:57px" viewBox="0 0 17 14"><path d="M0.6,3 Q0.6,1.5 2.1,1.5 H5.6 L7.5,3.6 H13.9 Q15.4,3.6 15.4,5.1 V10.9 Q15.4,12.4 13.9,12.4 H2.1 Q0.6,12.4 0.6,10.9 Z" fill="none" stroke="#d8d8d8" stroke-width="1.500" stroke-linejoin="round"/></svg><div class="ct bk" style="left:80.500px;letter-spacing:.26px">JavaScript Utils</div>
  <svg class="fold" style="left:202px" viewBox="0 0 17 14"><path d="M0.6,3 Q0.6,1.5 2.1,1.5 H5.6 L7.5,3.6 H13.9 Q15.4,3.6 15.4,5.1 V10.9 Q15.4,12.4 13.9,12.4 H2.1 Q0.6,12.4 0.6,10.9 Z" fill="none" stroke="#d8d8d8" stroke-width="1.500" stroke-linejoin="round"/></svg><div class="ct bk" style="left:225.500px;letter-spacing:.45px">Docker</div>
  <svg class="fold" style="left:292px" viewBox="0 0 17 14"><path d="M0.6,3 Q0.6,1.5 2.1,1.5 H5.6 L7.5,3.6 H13.9 Q15.4,3.6 15.4,5.1 V10.9 Q15.4,12.4 13.9,12.4 H2.1 Q0.6,12.4 0.6,10.9 Z" fill="none" stroke="#d8d8d8" stroke-width="1.500" stroke-linejoin="round"/></svg><div class="ct bk" style="left:315.500px;letter-spacing:.4px">ClearBlade</div>
  <svg class="fold" style="left:408px" viewBox="0 0 17 14"><path d="M0.6,3 Q0.6,1.5 2.1,1.5 H5.6 L7.5,3.6 H13.9 Q15.4,3.6 15.4,5.1 V10.9 Q15.4,12.4 13.9,12.4 H2.1 Q0.6,12.4 0.6,10.9 Z" fill="none" stroke="#d8d8d8" stroke-width="1.500" stroke-linejoin="round"/></svg><div class="ct bk" style="left:431.300px;letter-spacing:.5px">Rheem</div>
  <svg class="fold" style="left:497.5px" viewBox="0 0 17 14"><path d="M0.6,3 Q0.6,1.5 2.1,1.5 H5.6 L7.5,3.6 H13.9 Q15.4,3.6 15.4,5.1 V10.9 Q15.4,12.4 13.9,12.4 H2.1 Q0.6,12.4 0.6,10.9 Z" fill="none" stroke="#d8d8d8" stroke-width="1.500" stroke-linejoin="round"/></svg><div class="ct bk" style="left:521.800px;letter-spacing:.35px">HAProxy</div>
  <!-- star -->
  <svg class="abs" style="left:1569px;top:10px" width="20" height="20" viewBox="0 0 24 24"><path fill="#dcdcdc" d="M22 9.240l-7.190-.62L12 2 9.190 8.630 2 9.240l5.460 4.730L5.820 21 12 16.760 18.180 21l-1.630-7.030L22 9.240zM12 14.900l-3.760 2.580 1-4.280-3.320-2.880 4.380-.38L12 5.900l1.710 4.040 4.380.38-3.320 2.880 1 4.280L12 14.900z"/></svg>
  <!-- ext red icon + badge -->
  <div class="abs" style="left:1621px;top:12px;width:16px;height:16px;border-radius:2px;background:#d62f2a"></div>
  <div class="abs" style="left:1623px;top:18.500px;width:2.500px;height:2.500px;border-radius:1.250px;background:#f6e4e3"></div>
  <div class="abs" style="left:1627px;top:18px;width:2.500px;height:2px;background:#e8a7a4"></div>
  <div class="abs" style="left:1630.500px;top:18px;width:2.500px;height:2px;background:#e8a7a4"></div>
  <div class="abs" style="left:1634px;top:17.500px;width:1.500px;height:3px;background:#e8a7a4"></div>
  <div class="abs" style="left:1624.500px;top:19.500px;width:19px;height:15px;border-radius:4px;background:#3a3a3a"></div>
  <div class="abs" style="left:1625.200px;top:20.200px;width:17.600px;height:13.600px;border-radius:3.300px;background:#585858"></div>
  <div class="abs" style="left:1627.400px;top:20.300px;font-size:11.500px;line-height:14px;font-weight:700;color:#fcfcfc;letter-spacing:.1px">92</div>
  <!-- puzzle -->
  <svg class="abs" style="left:1650px;top:5px" width="30" height="30" viewBox="1650 5 30 30"><path fill="none" stroke="#cdcdcd" stroke-width="1.400" stroke-linejoin="round" d="M1658.600,14.500 Q1658.600,13.700 1659.400,13.700 H1663.500 a1.500,1.600 0 0 1 3,0 H1670.400 Q1671.200,13.700 1671.200,14.500 V18.500 a1.600,1.500 0 0 1 0,3 V25.550 Q1671.200,26.350 1670.400,26.350 H1659.400 Q1658.600,26.350 1658.600,25.550 V21.700 a1.700,1.700 0 0 0 0,-3.400 Z"/><path fill="#cdcdcd" d="M1663.500,13.700 a1.500,1.600 0 0 1 3,0 Z M1671.200,18.500 a1.600,1.500 0 0 1 0,3 Z"/></svg>
  <div class="abs" style="left:1691px;top:12.200px;width:2px;height:15.800px;background:#5e5e5e;border-radius:1px"></div>
  <div class="abs" style="left:1709px;top:11.800px;width:18px;height:18px;border-radius:9px;background:#044f40"></div>
  <div class="abs" style="left:1715.500px;top:11.800px;font-size:10.500px;line-height:16px;color:#e6e6e6">A</div>
  <!-- all bookmarks -->
  <div class="abs" style="left:1624.500px;top:49.500px;width:1.500px;height:15px;background:#5f5f5f;border-radius:1px"></div>
  <svg class="fold" style="left:1642px" viewBox="0 0 17 14"><path d="M0.6,3 Q0.6,1.5 2.1,1.5 H5.6 L7.5,3.6 H13.9 Q15.4,3.6 15.4,5.1 V10.9 Q15.4,12.4 13.9,12.4 H2.1 Q0.6,12.4 0.6,10.9 Z" fill="none" stroke="#d8d8d8" stroke-width="1.500" stroke-linejoin="round"/></svg><div class="ct bk" style="left:1666px">All Bookmarks</div>
  <!-- notification -->
  <div class="abs" style="left:567.500px;top:-10px;width:499px;height:74.500px;background:#1d1d1d;border:1px solid #353535;border-radius:0 0 8px 8px;box-shadow:0 3px 9px rgba(0,0,0,.42)"></div>
  <div class="abs" style="left:580px;top:18px;width:48.200px;height:20.200px;background:#808080"></div>
  <div class="abs" style="left:580px;top:18px;width:48.200px;height:2.100px;background:#242424"></div>
  <div class="abs" style="left:580px;top:20.100px;width:3px;height:18.100px;background:#1a1d20"></div>
  <div class="abs" style="left:583px;top:20.100px;width:45.200px;height:1px;background:#868686"></div>
  <div class="abs" style="left:591.800px;top:20.800px;width:22.500px;height:9.200px;background:#fdfdfd"></div>
  <div class="abs" style="left:624.700px;top:29px;width:3.500px;height:1.200px;background:#1d3d8d"></div>
  <div class="abs" style="left:585.800px;top:27px;width:1.200px;height:2.200px;background:#1c6a1c"></div>
  <div class="abs" style="left:588.500px;top:28.800px;width:1.400px;height:1.300px;background:#1c6a1c"></div>
  <div class="abs" style="left:589.800px;top:26.800px;width:1.300px;height:1.200px;background:#1c6a1c"></div>
  <div class="abs" style="left:590.800px;top:31.800px;width:1px;height:1px;background:#3b7a3b"></div>
  <div class="abs" style="left:585.800px;top:33.800px;width:1px;height:1.200px;background:#3a2a9a"></div>
  <div class="abs" style="left:587.800px;top:34px;width:1.200px;height:2px;background:#252525"></div>
  <div class="abs" style="left:590px;top:34px;width:1.200px;height:2px;background:#252525"></div>
  <div class="abs" style="left:592px;top:34px;width:1.800px;height:1px;background:#4a4a4a"></div>
  <div class="abs" style="left:622px;top:36.800px;width:6px;height:1.400px;background:#6a6a6a"></div>
  <div class="ct" style="left:639.500px;top:2.500px;letter-spacing:.3px;color:#f0f0f0">Screenshot captured</div>
  <div class="ct" style="left:639.500px;top:24.500px;letter-spacing:.2px;color:#f0f0f0">You can paste the image from the</div><div class="ct" style="left:864.800px;top:24.500px;letter-spacing:.6px;color:#f0f0f0">clipboard.</div>
</div>

</div>
</body>
</html>
